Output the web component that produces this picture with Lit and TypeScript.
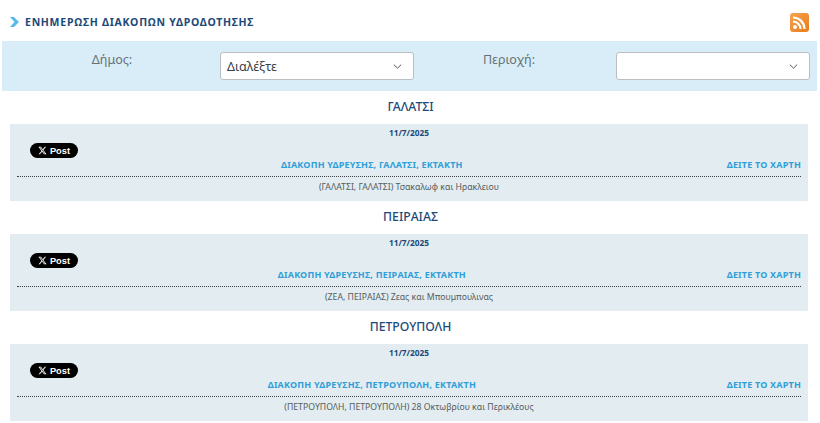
import { LitElement, html, css, svg } from "lit";
import { customElement } from "lit/decorators.js";

const items = [
  { city: "ΓΑΛΑΤΣΙ", desc: "(ΓΑΛΑΤΣΙ, ΓΑΛΑΤΣΙ) Τσακαλωφ και Ηρακλειου" },
  { city: "ΠΕΙΡΑΙΑΣ", desc: "(ΖΕΑ, ΠΕΙΡΑΙΑΣ) Ζεας και Μπουμπουλινας" },
  { city: "ΠΕΤΡΟΥΠΟΛΗ", desc: "(ΠΕΤΡΟΥΠΟΛΗ, ΠΕΤΡΟΥΠΟΛΗ) 28 Οκτωβρίου και Περικλέους" },
];

const chevron = svg`<svg class="chev" width="9" height="5" viewBox="0 0 9 5"><path d="M.8.6l3.7 3.6L8.2.6" fill="none" stroke="#555" stroke-width="1"/></svg>`;

@customElement("app-root")
export class AppRoot extends LitElement {
  static styles = css`
    :host { display: block; width: 820px; height: 423px; background: #fff; overflow: hidden; font-family: "Noto Sans", sans-serif; }
    .head { height: 41px; display: flex; align-items: center; padding: 3px 11px 0 10px; box-sizing: border-box; }
    .head h1 { margin: 0 0 0 6px; flex: 1; font-size: 10.5px; font-weight: 700; letter-spacing: 0.75px; color: #1c4a78; }
    .filter { margin: 0 3px 0 2px; height: 50px; background: #d9edf9; display: flex; padding-left: 12px; color: #667075; font-size: 12.5px; }
    .label { text-align: center; padding-top: 10px; line-height: 18px; }
    .l1 { width: 196px; }
    .l2 { width: 190px; }
    .select { margin-top: 11px; width: 194px; height: 28px; box-sizing: border-box; background: #fff; border: 1px solid #b9bfc3; border-radius: 3px; display: flex; align-items: center; justify-content: space-between; padding: 0 11px 0 6px; color: #3a4043; font-size: 12.5px; }
    .s1 { margin-left: 10px; }
    .s2 { margin-left: 12px; }
    .city { height: 33px; display: flex; align-items: center; justify-content: center; padding: 0 0 3px 1px; box-sizing: border-box; font-size: 12.2px; color: #1c4a78; font-weight: 500; }
    .card { margin: 0 12px 0 10px; height: 77px; background: #e3ecf0; padding: 0 7px; box-sizing: border-box; }
    .date { height: 19px; line-height: 17px; text-align: center; font-size: 8.3px; font-weight: 700; color: #1c4a78; }
    .post { margin-left: 13px; width: 48px; height: 15px; margin-bottom: -3px; box-sizing: border-box; background: #000; border-radius: 8px; color: #fff; display: flex; align-items: center; justify-content: center; gap: 3px; font: 700 9.3px "Liberation Sans", sans-serif; }
    .links { height: 21px; display: flex; align-items: center; font-size: 9px; font-weight: 700; color: #2f9fd9; letter-spacing: 0.2px; padding-bottom: 3px; box-sizing: border-box; }
    .links .main { flex: 1; text-align: center; }
    .rule { border-top: 1.5px dotted #3c4246; }
    .desc { text-align: center; font-size: 8.7px; line-height: 20px; color: #565d61; }
  `;

  render() {
    return html`
      <div class="head">
        <svg width="9" height="10" viewBox="0 0 9 10"><path d="M0 0h4l5 5-5 5H0l4.5-5z" fill="#5cb8e6"/></svg>
        <h1>ΕΝΗΜΕΡΩΣΗ ΔΙΑΚΟΠΩΝ ΥΔΡΟΔΟΤΗΣΗΣ</h1>
        <svg width="19" height="19" viewBox="0 0 19 19">
          <defs><linearGradient id="g" x1="0" y1="0" x2="1" y2="1"><stop offset="0" stop-color="#f5a34e"/><stop offset="1" stop-color="#e97d1e"/></linearGradient></defs>
          <rect width="19" height="19" rx="3" fill="url(#g)"/>
          <circle cx="5" cy="14" r="2" fill="#fff"/>
          <path d="M3 8.5a7.5 7.5 0 0 1 7.5 7.5M3 4.5a11.5 11.5 0 0 1 11.5 11.5" fill="none" stroke="#fff" stroke-width="2.2"/>
        </svg>
      </div>
      <div class="filter">
        <div class="label l1">Δήμος:</div>
        <div class="select s1"><span>Διαλέξτε</span>${chevron}</div>
        <div class="label l2">Περιοχή:</div>
        <div class="select s2"><span></span>${chevron}</div>
      </div>
      ${items.map(
        (i) => html`
          <div class="city">${i.city}</div>
          <div class="card">
            <div class="date">11/7/2025</div>
            <div class="post">
              <svg width="9" height="9" viewBox="0 0 24 24"><path fill="#fff" d="M18.2 2.2h3.3l-7.2 8.3 8.5 11.3h-6.7l-5.2-6.8-6 6.8H1.6l7.7-8.8L1.2 2.2H8l4.7 6.2zm-1.2 17.6h1.8L7.1 4.1H5.1z"/></svg>
              <span>Post</span>
            </div>
            <div class="links">
              <span class="main">ΔΙΑΚΟΠΗ ΥΔΡΕΥΣΗΣ, ${i.city}, ΕΚΤΑΚΤΗ</span>
              <span>ΔΕΙΤΕ ΤΟ ΧΑΡΤΗ</span>
            </div>
            <div class="rule"></div>
            <div class="desc">${i.desc}</div>
          </div>
        `
      )}
    `;
  }
}
